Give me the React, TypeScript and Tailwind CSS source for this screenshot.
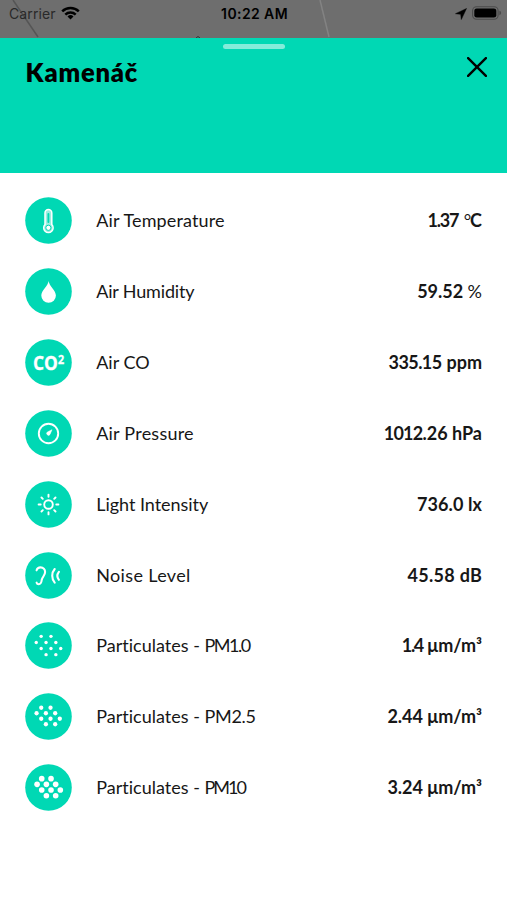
import React, { type ReactNode } from "react";

const pattern = [[-1.5, -1.5], [0.5, -1.5], [-2.5, -0.5], [-0.5, -0.5], [1.5, -0.5], [-1.5, 0.5], [0.5, 0.5], [2.5, 0.5], [-0.5, 1.5], [1.5, 1.5]];

const Icon = ({ children }: { children: ReactNode }) => (
  <svg viewBox="0 0 47 47" className="size-[47px] shrink-0 overflow-visible">
    <circle cx="23.5" cy="23.5" r="23.3" fill="#00d8b4" />
    {children}
  </svg>
);

const Dots = ({ r, dx, dy, cx, cy }: { r: number; dx: number; dy: number; cx: number; cy: number }) => (
  <Icon>
    {pattern.map(([x, y], i) => (
      <circle key={i} cx={cx + x * dx} cy={cy + y * dy} r={r} fill="white" />
    ))}
  </Icon>
);

const Thermometer = () => (
  <Icon>
    <path d="M20 27.6V16a3.4 3.4 0 0 1 6.8 0v11.6a4.7 4.7 0 1 1-6.8 0Z" fill="#9defe0" stroke="white" strokeWidth="1.5" />
    <path d="M23.4 17v8" stroke="#00d8b4" strokeWidth="1.9" strokeLinecap="round" />
    <circle cx="23.4" cy="30.8" r="2.6" fill="white" stroke="#00d8b4" strokeWidth="1" />
  </Icon>
);
const Drop = () => (
  <Icon><path d="M23.6 13c.5 5 7.3 9.5 7.3 14.5a7.3 7.3 0 0 1-14.6 0c0-5 6.8-9.5 7.3-14.5Z" fill="white" /></Icon>
);
const Co = () => (
  <Icon>
    <text x="8" y="30.9" fill="white" stroke="white" strokeWidth=".3" fontSize="19.5" fontWeight="700" textLength="31" lengthAdjust="spacingAndGlyphs" className="font-['Open_Sans',sans-serif]">
      CO<tspan fontSize="12" dy="-6.2">2</tspan>
    </text>
  </Icon>
);
const Gauge = () => (
  <Icon>
    <circle cx="23.5" cy="23.5" r="9.7" fill="none" stroke="white" strokeWidth="1.9" />
    <path d="m27 19.7-2 4.7a1.8 1.8 0 1 1-2.6-2.4Z" fill="white" stroke="white" strokeWidth=".5" />
  </Icon>
);
const Sun = () => (
  <Icon>
    <g fill="none" stroke="white" strokeWidth="1.9" strokeLinecap="round">
      <circle cx="23.5" cy="23.5" r="4.3" />
      <path d="M23.5 13.6v2.1M23.5 31.3v2.1M13.6 23.5h2.1M31.3 23.5h2.1M16.5 16.5l1.3 1.3M29.2 29.2l1.3 1.3M16.5 30.5l1.3-1.3M29.2 17.8l1.3-1.3" />
    </g>
  </Icon>
);
const Ear = () => (
  <Icon>
    <g fill="none" stroke="white" strokeWidth="2.1" strokeLinecap="round">
      <path d="M11.6 18.3c.6-2 2-2.9 3.9-2.9 2.8 0 4.6 2 4.6 4.7 0 3.6-2.9 4.7-3.4 7.9-.3 2.9-1.5 4.2-3 4.2-1.1 0-1.8-.5-2.1-1.5" />
      <path d="M29.7 17c-3.3 3.8-3.3 9.8 0 13.6M33.9 19.8c-1.9 2.4-1.9 5.6 0 8" />
    </g>
  </Icon>
);

type Row = { id: string; icon: ReactNode; label: ReactNode; value: ReactNode };

const mu = <span className="tracking-[-0.05px]"> μm/m³</span>;

const rows: Row[] = [
  { id: "temperature", icon: <Thermometer />, label: <span className="tracking-[0.14px]">Air Temperature</span>, value: <><span className="tracking-[-1.2px]">1.3</span>7 <span className="font-normal tracking-[-1.2px]">°</span>C</> },
  { id: "humidity", icon: <Drop />, label: <span className="tracking-[-0.16px]">Air Humidity</span>, value: <>59.52 <span className="font-normal">%</span></> },
  { id: "co", icon: <Co />, label: "Air CO", value: <><span className="tracking-[-0.6px]">335.1</span>5 ppm</> },
  { id: "pressure", icon: <Gauge />, label: <span className="tracking-[0.23px]">Air Pressure</span>, value: <><span className="tracking-[-0.75px]">1012</span>.26 hPa</> },
  { id: "light", icon: <Sun />, label: <span className="tracking-[-0.03px]">Light Intensity</span>, value: <span className="-mr-[0.1px] tracking-[0.1px]">736.0 lx</span> },
  { id: "noise", icon: <Ear />, label: <span className="tracking-[0.36px]">Noise Level</span>, value: <span className="-mr-[0.2px] tracking-[0.28px]">45.58 dB</span> },
  { id: "pm1", icon: <Dots r={1.7} dx={4.9} dy={6.1} cx={23.5} cy={23.5} />, label: <span className="tracking-[0.01px]">Particulates - <span className="tracking-[-1.5px]">PM1.</span>0</span>, value: <><span className="tracking-[-1.3px]">1.4</span>{mu}</> },
  { id: "pm25", icon: <Dots r={2.15} dx={4.65} dy={5.5} cx={23.2} cy={23} />, label: <span className="tracking-[0.01px]">Particulates - <span className="tracking-[-0.3px]">PM2.</span>5</span>, value: <>2.44{mu}</> },
  { id: "pm10", icon: <Dots r={2.8} dx={4.65} dy={5.7} cx={23.7} cy={23.2} />, label: <span className="tracking-[0.01px]">Particulates - <span className="tracking-[-2px]">PM1</span>0</span>, value: <>3.24{mu}</> },
];

export default function App() {
  return (
    <main className="flex h-[900px] w-[507px] flex-col overflow-hidden bg-white font-['Lato',sans-serif] text-[#171717]">
      <header className="relative flex h-[37.6px] shrink-0 items-start justify-between bg-[#6e6e6e] font-['Inter',sans-serif] text-black">
        <svg viewBox="0 0 507 38" className="absolute inset-0 h-[38px] w-full" fill="none">
          <path d="M13 0 38 37" stroke="#555" strokeWidth="1.5" />
          <path d="m320 0 9 37" stroke="#838383" strokeWidth="1.5" />
          <path d="M196 38l2-1.5 2 1.5" stroke="#333" />
        </svg>
        <div className="relative flex flex-1 gap-[5.5px] pl-[9px]">
          <span className="text-[14px] leading-[28px] tracking-[0.12px] text-[#292929]">Carrier</span>
          <svg viewBox="0 0 19 14" className="mt-[6px] h-[14px] w-[19px]" fill="none" stroke="black" strokeWidth="2.5">
            <path d="M1.2 5.3a12 12 0 0 1 16.6 0M4.3 8.7a7.5 7.5 0 0 1 10.4 0" />
            <path d="m9.5 13.4-3-3a4.4 4.4 0 0 1 6 0Z" fill="black" stroke="none" />
          </svg>
        </div>
        <span className="relative -left-px text-[14px] leading-[28px] font-semibold tracking-[0.4px]">10:22 AM</span>
        <div className="relative flex flex-1 justify-end gap-[5px] pt-[6px] pr-[5px]">
          <svg viewBox="0 0 12 12" className="mt-[2px] size-[12px]"><path d="M11.5.5.5 5.7l5.2.6.6 5.2Z" fill="black" stroke="black" strokeWidth=".5" strokeLinejoin="round" /></svg>
          <svg viewBox="0 0 30 14" className="h-[14px] w-[30px]">
            <rect x=".6" y=".7" width="25.5" height="12.6" rx="4" fill="none" stroke="#4b4b4b" strokeWidth="1.1" />
            <rect x="2.3" y="2.4" width="22" height="9.2" rx="2.4" />
            <path d="M27.4 4.8c2.3.6 2.3 3.8 0 4.4Z" fill="#4b4b4b" />
          </svg>
        </div>
      </header>
      <section className="flex h-[135.4px] shrink-0 flex-col items-center bg-[#00d8b4] pt-[6px] text-black">
        <div className="h-[5px] w-[62px] rounded-full bg-[#83ecda]" />
        <div className="flex w-full items-start justify-between pt-[8px] pr-[20px] pl-[25.6px]">
          <h1 className="text-[25.5px] leading-[30px] font-extrabold tracking-[0.8px]">Kamenáč</h1>
          <svg viewBox="0 0 20 20" className="size-[20px]" stroke="black" strokeWidth="2.4" strokeLinecap="round"><path d="m1.1 1.1 17.8 17.8M18.9 1.1 1.1 18.9" /></svg>
        </div>
      </section>
      <ul className="pt-[12.2px] pr-[25px] pl-[25px]">
        {rows.map((r) => (
          <li key={r.id} className="flex h-[70.9px] items-center">
            {r.icon}
            <span className="ml-[24.2px] text-[18px] whitespace-nowrap">{r.label}</span>
            <span className="ml-auto text-[18px] font-bold whitespace-nowrap">{r.value}</span>
          </li>
        ))}
      </ul>
    </main>
  );
}
